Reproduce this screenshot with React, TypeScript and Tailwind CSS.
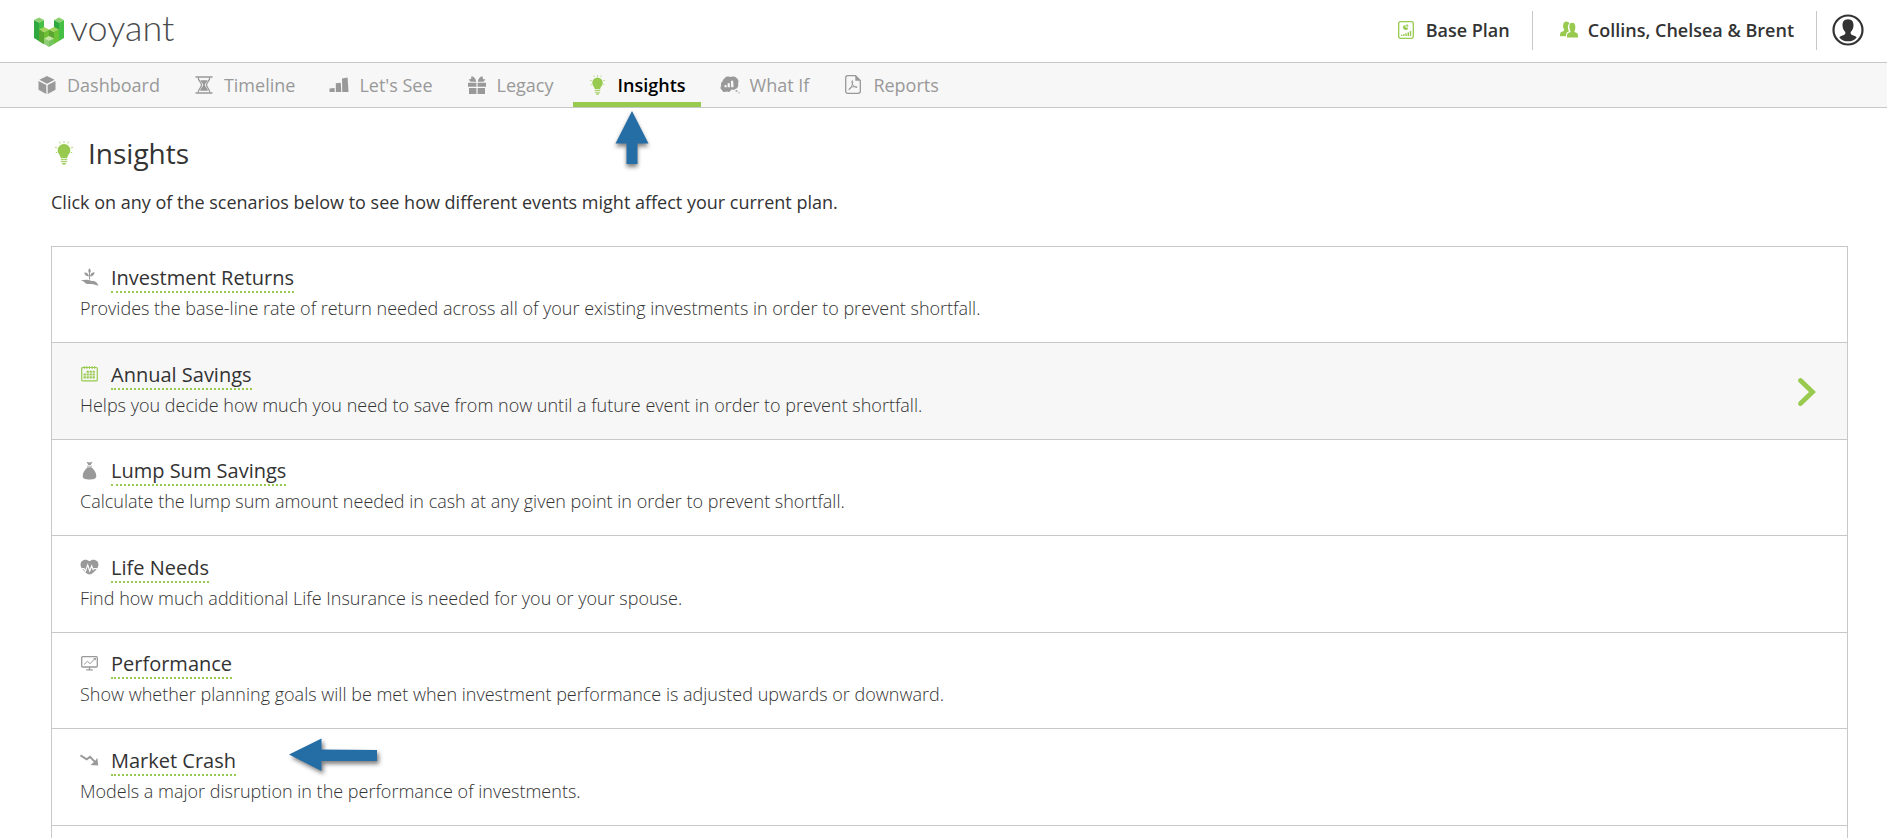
import type { ReactNode } from 'react';
import clsx from 'clsx';

type IconProps = { className?: string };

/* Icons */

function BulbIcon({ className }: IconProps) {
  return (
    <svg viewBox="0 0 18 24" className={className} fill="currentColor" aria-hidden="true">
      <path d="M9 3A6.300 6.300 0 0 0 2.700 9.200c0 3.600 2.900 4.600 3.100 8h6.400c.2-3.400 3.100-4.400 3.100-8A6.300 6.300 0 0 0 9 3z" />
      <path d="M5.800 18h6.400v1.200H5.800zM5.800 20h6.400v1.200H5.800zM6.500 22h5l-1 1.300a2 2 0 0 1-3 0z" opacity="0.8" />
      <path
        d="M9 .1v2M4.400.7l.9 1.700M13.600.7l-.9 1.700M0 6.500l2.100.4M18 6.500l-2.100.4M.8 11.800l1.500-.6M17.200 11.800l-1.500-.6"
        stroke="currentColor"
        strokeWidth="1"
        opacity="0.8"
      />
    </svg>
  );
}

function CubeIcon({ className }: IconProps) {
  return (
    <svg viewBox="0 0 18 18" className={className} fill="currentColor" aria-hidden="true">
      <path d="M9 0l7.600 3.700L9 7.800 1.400 3.700z" />
      <path d="M.5 5l7.800 4.100V18L.5 13.700z" />
      <path d="M17.500 5L9.700 9.100V18l7.800-4.300z" />
    </svg>
  );
}

function HourglassIcon({ className }: IconProps) {
  return (
    <svg viewBox="0 0 18 18" className={className} aria-hidden="true">
      <path d="M.5 1h17M.5 17h17" stroke="currentColor" strokeWidth="1.600" />
      <path
        d="M3.200 1.500c0 3.500 3.300 5 3.300 7.500s-3.300 4-3.300 7.500M14.800 1.500c0 3.500-3.300 5-3.300 7.500s3.300 4 3.300 7.500"
        fill="none"
        stroke="currentColor"
        strokeWidth="1.300"
      />
      <path d="M5.300 4.200h7.400C12 6.200 10 7.200 9.800 9c.2 2 2.700 3 3.200 5.800H5C5.500 12 8 11 8.200 9 8 7.200 6 6.200 5.300 4.200z" fill="currentColor" />
    </svg>
  );
}

function BarsIcon({ className }: IconProps) {
  return (
    <svg viewBox="0 0 20 18" className={className} fill="currentColor" aria-hidden="true">
      <path d="M.5 12.500l5-.6.3 4H.5zM6.800 7.200l5-.5.5 9.200H6.900zM13 2.500l5.600-.9.9 14.300h-6.200z" />
    </svg>
  );
}

function GiftIcon({ className }: IconProps) {
  return (
    <svg viewBox="0 0 18 18" className={className} fill="currentColor" aria-hidden="true">
      <path d="M0 6.800h8.400v4H0zM9.600 6.800H18v4H9.600zM1 12h7.400v6H1zM9.600 12H17v6H9.600z" />
      <path d="M8.200 5.700H2.600L.6 3.500 3 3 3.500.2C6 .5 8 2.800 8.200 5.700zM9.800 5.700h5.600l2-2.200L15 3 14.500.2C12 .5 10 2.800 9.800 5.700z" />
    </svg>
  );
}

function ThoughtIcon({ className }: IconProps) {
  return (
    <svg viewBox="0 0 20 18" className={className} aria-hidden="true">
      <path
        d="M4.500 2.500C5.500.5 8 .2 10 .9c2.300-.9 6-.8 7 1.600 1.700 1.200 1.800 3.700 1 5.100.8 2.200-.1 4.900-2.500 5.400-1.200 1-3 1-4.300.6-.6 2-2.400 2.800-4 2-2.400.9-4.800.6-5.200-1.600C.3 13.200 0 11 1.300 9.800.6 8 1 6.400 2.500 5.600c.2-1.400.8-2.600 2-3.100z"
        fill="currentColor"
      />
      <path d="M4.500 9.300l2-.3.2 2.300H4.500zM7.600 7.200l2.100-.3.300 4.400H7.700zM10.900 5l2.200-.4.5 6.700h-2.500z" fill="#f7f7f7" />
      <path d="M15.600 14.200h1.800v1.500h-1.800zM18.500 16.200h1.200v1.100h-1.200z" fill="currentColor" />
    </svg>
  );
}

function PdfIcon({ className }: IconProps) {
  return (
    <svg viewBox="0 0 16 19" className={className} aria-hidden="true">
      <path
        d="M2.500.7h8l4.800 4.800v10.800a2 2 0 0 1-2 2H2.700a2 2 0 0 1-2-2V2.500A1.800 1.800 0 0 1 2.500.7z"
        fill="none"
        stroke="currentColor"
        strokeWidth="1.300"
      />
      <path d="M10.300.7v5h5z" fill="currentColor" />
      <path
        d="M7.300 5.600c-.6 0-.6 1.300 0 3 .7 2.100 2.200 3.900 4.500 3.900.8-.6-.3-1.200-2-1-2.400.2-4.500.9-5.500 2-.9 1.200-.2 1.800.6.7 1.200-1.600 2.400-4 2.700-6.200.1-1.200.100-2.400-.3-2.400z"
        fill="none"
        stroke="currentColor"
      />
    </svg>
  );
}

function PlanIcon({ className }: IconProps) {
  return (
    <svg viewBox="0 0 16 18" className={className} aria-hidden="true">
      <rect x="0.700" y="0.700" width="14.600" height="16.600" rx="1.800" fill="none" stroke="currentColor" strokeWidth="1.300" />
      <path d="M7.500 4v2.400H10A2.500 2.500 0 1 1 7.500 4z" fill="currentColor" />
      <path d="M8.300 3.300a2.200 2.200 0 0 1 2.200 2.200H8.300z" fill="currentColor" />
      <path d="M3 13.700h1.400v1.300H3zM5.200 13h1.400v2H5.200zM7.400 12.200h1.400V15H7.400zM9.600 11.300H11V15H9.600zM11.800 10h1.400v5h-1.400z" fill="currentColor" />
    </svg>
  );
}

function PeopleIcon({ className }: IconProps) {
  return (
    <svg viewBox="0 0 18 17" className={className} fill="currentColor" aria-hidden="true">
      <path d="M6.200.4c2 0 3 1 3.200 2C8 3.600 7.600 5.500 8.100 8c.2.900.5 1.400.8 1.900-.2.800-1.700 1-2.200 1.800-.4.600-.6 1.700-.7 3.600H0c0-2.600.2-3.900 1.200-4.400 1.200-.6 2.800-.9 3-1.700.2-.6-.1-1-.5-1.600C2.700 6.200 2.600.4 6.200.4z" />
      <path d="M12.200 1.800c3.700 0 3.600 5.300 2.600 7.600-.3.600-.4 1-.3 1.400.3.700 1.800.9 2.600 1.400.8.500.9 2 .9 4.400H7c0-2.400.1-3.900.9-4.400.8-.5 2.300-.7 2.600-1.400.1-.4 0-.8-.3-1.400-1-2.300-1.700-7.600 2-7.600z" />
    </svg>
  );
}

function AvatarIcon({ className }: IconProps) {
  return (
    <svg viewBox="0 0 32 32" className={className} aria-hidden="true">
      <circle cx="16" cy="16" r="14.500" fill="none" stroke="currentColor" strokeWidth="2.200" />
      <path
        d="M16 5.200c4 0 5.700 2.800 5.500 6.400-.1 2.800-1.200 5-2.800 6.500-.2 1.500.2 2.500 1.500 3 1.800.7 3.500 1.200 4.500 2.300C22.500 26 19.500 27.300 16 27.300S9.500 26 7.300 23.400c1-1.100 2.700-1.600 4.500-2.300 1.300-.5 1.700-1.500 1.500-3-1.600-1.500-2.700-3.700-2.800-6.500-.2-3.600 1.500-6.400 5.500-6.400z"
        fill="currentColor"
      />
    </svg>
  );
}

function SproutIcon({ className }: IconProps) {
  return (
    <svg viewBox="0 0 19 18" className={className} fill="currentColor" aria-hidden="true">
      <path d="M9.500.3c1.700 1.600 1.700 3.700 0 5.300-1.600-1.600-1.600-3.700 0-5.300zM4.200 4.600c2.600-.3 4.300 1 4.700 3.600-2.600.2-4.300-1-4.700-3.600zM14.600 4.200c-.2 2.700-1.800 4.100-4.500 4.200.1-2.700 1.800-4.100 4.500-4.200z" />
      <path d="M9 5h1v6.500H9z" />
      <path d="M.6 12c2.400.2 5.200-.8 8-.1 1.700.4 3 1.200 5 1.200 2 .1 4 2.400 5 4.600-2.300-.5-4.700-1.700-7.400-1.700-3 0-5 .3-6.200-1.200-.9-1.200-2.600-2.100-4.400-2.800z" />
    </svg>
  );
}

function CalendarIcon({ className }: IconProps) {
  return (
    <svg viewBox="0 0 19 18" className={className} fill="currentColor" aria-hidden="true">
      <rect x="1.700" y="2.500" width="15.600" height="13.400" rx="1" fill="none" stroke="currentColor" strokeWidth="1.200" />
      <path d="M3.800.9h.9v3h-.9zM6.400.9h.9v3h-.9zM9 .9h.9v3H9zM11.700.9h.9v3h-.9zM14.300.9h.9v3h-.9z" />
      <path d="M3.600 11.300h2.200v2.300H3.600zM3.600 8.500h2.200v2.100H3.600zM6.600 5.700h2.200v2.100H6.600zM6.600 8.500h2.200v2.100H6.600zM6.600 11.300h2.200v2.300H6.600zM9.600 5.700h2.200v2.100H9.600zM9.600 8.500h2.200v2.100H9.600zM9.600 11.300h2.200v2.300H9.600zM12.600 5.700h2.200v2.100h-2.200zM12.600 8.500h2.200v2.100h-2.200zM12.600 11.300h2.200v2.300h-2.200z" />
    </svg>
  );
}

function MoneyBagIcon({ className }: IconProps) {
  return (
    <svg viewBox="0 0 19 19" className={className} fill="currentColor" aria-hidden="true">
      <path d="M6.500.7l3 .9 3-.9-1.800 3.200H8.300zM7 4.700h5v.9H7z" />
      <path d="M7.600 6.200h3.800c3 2.300 5 5.800 4.900 8.800 0 2.900-3 3.500-6.800 3.500s-6.800-.6-6.800-3.500c-.1-3 1.900-6.500 4.900-8.800z" />
    </svg>
  );
}

function HeartPulseIcon({ className }: IconProps) {
  return (
    <svg viewBox="0 0 19 17" className={className} aria-hidden="true">
      <path d="M9.500 2.300C11.500.2 15.300 0 17.300 2.300c2 2.400 1.200 5.900-.7 8-2.100 2.300-4.600 5.300-7.100 5.300s-5-3-7.100-5.300C.5 8.200-.3 4.700 1.700 2.300 3.700 0 7.500.2 9.500 2.300z" fill="currentColor" />
      <path d="M2 9.600h2l1.500 2.500L7.700 6l2 6 2-5.200 1.400 4 1.200-1.300h2.700" fill="none" stroke="#fff" strokeWidth="1.100" />
    </svg>
  );
}

function MonitorIcon({ className }: IconProps) {
  return (
    <svg viewBox="0 0 19 17" className={className} fill="none" stroke="currentColor" aria-hidden="true">
      <rect x="1.700" y="1.700" width="15.600" height="10.300" rx="1" strokeWidth="1.300" />
      <path d="M4 9.500l3.500-3.200L10 8.800l4.500-4.700" />
      <path d="M13.500 3.800l1.700-.3.100 1.800M9.500 12v2.300M6.300 14.900h6.400" strokeWidth="1.200" />
    </svg>
  );
}

function CrashIcon({ className }: IconProps) {
  return (
    <svg viewBox="0 0 20 17" className={className} aria-hidden="true">
      <path d="M.5 3l6.500 4.200 3.600-2.500 5.800 6" fill="none" stroke="currentColor" strokeWidth="2.100" />
      <path d="M18.200 5.500l1 8.200-8.200-.5 2.900-2.300 2-1.900z" fill="currentColor" />
    </svg>
  );
}

function ChevronIcon({ className }: IconProps) {
  return (
    <svg viewBox="0 0 20 30" className={className} aria-hidden="true">
      <path d="M3.500 3.500L15.500 15l-12 11.500" fill="none" stroke="currentColor" strokeWidth="4.800" strokeLinecap="round" />
    </svg>
  );
}

function LogoMark({ className }: IconProps) {
  return (
    <svg viewBox="0 0 30 30" className={className} aria-hidden="true">
      <path d="M0 3l5 2.500v10l5 3v8.700L0 21z" fill="#2fa840" />
      <path d="M5 5.500L10 3v10l-5 3z" fill="#45c045" />
      <path d="M0 3L5 .5 10 3 5 5.500z" fill="#8ccf6e" />
      <path d="M20 3l5 2.500V17l-5 3z" fill="#2fa840" />
      <path d="M25 5.500L30 3v18l-5 3z" fill="#45c045" />
      <path d="M20 3L25 .5 30 3l-5 2.500z" fill="#8ccf6e" />
      <path d="M5 12.500l5 2.500v12l-5-3z" fill="#5ba631" />
      <path d="M10 15l5-2.500V27h-5z" fill="#6fbf34" />
      <path d="M5 12.500L10 10l5 2.500-5 2.500z" fill="#a3d45c" />
      <path d="M15 12.500l5 2.500v12h-5z" fill="#5ba631" />
      <path d="M20 15l5-2.500V24l-5 3z" fill="#6cc335" />
      <path d="M15 12.500l5-2.500 5 2.500-5 2.500z" fill="#a3d45c" />
      <path d="M10 21.500l5 2.500v6l-5-3z" fill="#8fce77" />
      <path d="M15 24l5-2.500V27l-5 3z" fill="#74c45f" />
      <path d="M10 21.500l5-2.500 5 2.500-5 2.500z" fill="#c6e6a5" />
    </svg>
  );
}

function ArrowUp({ className }: IconProps) {
  return (
    <svg viewBox="0 0 34 54" className={className} aria-hidden="true">
      <path d="M17 0l16.500 32.500h-11V53h-11V32.500H.5z" fill="#256da5" />
    </svg>
  );
}

function ArrowLeft({ className }: IconProps) {
  return (
    <svg viewBox="0 0 88 34" className={className} aria-hidden="true">
      <path d="M0 16.500L32.500.5v11L88 12v11H32.500v10z" fill="#256da5" />
    </svg>
  );
}

/* Data */

const navItems = [
  { label: 'Dashboard', icon: <CubeIcon className="h-[18px] w-[18px]" /> },
  { label: 'Timeline', icon: <HourglassIcon className="h-[18px] w-[18px]" /> },
  { label: "Let's See", icon: <BarsIcon className="h-[18px] w-5" /> },
  { label: 'Legacy', icon: <GiftIcon className="h-[18px] w-[18px]" /> },
  { label: 'Insights', icon: <BulbIcon className="h-5 w-[15px] text-[#97ca4f]" />, active: true },
  { label: 'What If', icon: <ThoughtIcon className="h-[18px] w-5" /> },
  { label: 'Reports', icon: <PdfIcon className="h-[19px] w-4" /> },
];

type Scenario = {
  title: string;
  description: string;
  icon: ReactNode;
  selected?: boolean;
  pointer?: boolean;
};

const scenarios: Scenario[] = [
  {
    title: 'Investment Returns',
    description:
      'Provides the base-line rate of return needed across all of your existing investments in order to prevent shortfall.',
    icon: <SproutIcon className="h-[18px] w-[19px]" />,
  },
  {
    title: 'Annual Savings',
    description: 'Helps you decide how much you need to save from now until a future event in order to prevent shortfall.',
    icon: <CalendarIcon className="h-[18px] w-[19px] text-[#97ca4f]" />,
    selected: true,
  },
  {
    title: 'Lump Sum Savings',
    description: 'Calculate the lump sum amount needed in cash at any given point in order to prevent shortfall.',
    icon: <MoneyBagIcon className="h-[19px] w-[19px]" />,
  },
  {
    title: 'Life Needs',
    description: 'Find how much additional Life Insurance is needed for you or your spouse.',
    icon: <HeartPulseIcon className="h-[17px] w-[19px]" />,
  },
  {
    title: 'Performance',
    description: 'Show whether planning goals will be met when investment performance is adjusted upwards or downward.',
    icon: <MonitorIcon className="h-[17px] w-[19px]" />,
  },
  {
    title: 'Market Crash',
    description: 'Models a major disruption in the performance of investments.',
    icon: <CrashIcon className="h-[17px] w-5" />,
    pointer: true,
  },
];

function Header() {
  return (
    <header className="flex h-[63px] items-start justify-between border-b border-[#c8c8c8] bg-white pr-[23px] pl-[34px]">
      <a href="#" className="flex pt-[17px]">
        <LogoMark className="h-[30px] w-[30px]" />
        <span className="ml-1.5 -mt-3 font-[Lato] text-4xl leading-[44px] font-light text-[#4a4b4d]">voyant</span>
      </a>

      <div className="mt-[11px] flex h-[39px] items-center text-lg font-semibold text-[#333]">
        <a href="#" className="flex h-full items-center border-r border-[#c8c8c8] pr-[22px] pb-0.5">
          <PlanIcon className="mr-3 h-[18px] w-4 text-[#97ca4f]" />
          Base Plan
        </a>
        <a href="#" className="flex h-full items-center border-r border-[#c8c8c8] pr-[22px] pb-0.5 pl-[27px]">
          <PeopleIcon className="mr-2.5 h-[17px] w-[18px] text-[#97ca4f]" />
          Collins, Chelsea &amp; Brent
        </a>
        <button type="button" aria-label="Account" className="ml-[15px] pb-0.5 text-[#333]">
          <AvatarIcon className="h-8 w-8" />
        </button>
      </div>
    </header>
  );
}

function Nav() {
  return (
    <nav className="flex h-[45px] gap-1 border-b border-[#c8c8c8] bg-[#f7f7f7] pl-[22px]">
      {navItems.map((item) => (
        <a
          key={item.label}
          href="#"
          className={clsx(
            'relative flex items-center border-b-5 px-[15px] pt-1 text-lg',
            item.active ? 'border-[#97ca4f] font-semibold text-black' : 'border-transparent text-[#999]',
          )}
        >
          <span className="mr-2.5 flex w-5 justify-center text-[#999]">{item.icon}</span>
          {item.label}
          {item.active && (
            <ArrowUp className="absolute top-12 left-[42px] h-[54px] w-[34px] drop-shadow-[0_3px_2px_rgba(0,0,0,0.5)]" />
          )}
        </a>
      ))}
    </nav>
  );
}

function ScenarioRow({ title, description, icon, selected, pointer }: Scenario) {
  return (
    <li
      className={clsx(
        'flex items-center justify-between border-b border-[#c8c8c8] pt-4 pr-[30px] pb-5 pl-7 even:pt-[17px]',
        selected && 'bg-[#f7f7f7]',
      )}
    >
      <div>
        <h2 className="flex h-8 items-start text-xl leading-[30px] text-[#333]">
          <span className="mt-1 mr-3 flex h-5 w-[19px] items-center text-[#999]">{icon}</span>
          <span className="relative">
            <a href="#" className="border-b-2 border-dotted border-[#97ca4f]">
              {title}
            </a>
            {pointer && (
              <ArrowLeft className="absolute -top-2 left-full ml-[53px] h-[34px] w-[88px] drop-shadow-[2px_3px_2px_rgba(0,0,0,0.5)]" />
            )}
          </span>
        </h2>
        <p className="text-lg leading-[27px] font-light text-[#333]">{description}</p>
      </div>
      {selected && <ChevronIcon className="mt-1 h-[30px] w-5 text-[#97ca4f]" />}
    </li>
  );
}

export default function App() {
  return (
    <div className="bg-white font-['Open_Sans',sans-serif]">
      <Header />
      <Nav />

      <main className="pt-6 pr-[39px] pl-[51px]">
        <h1 className="flex items-center gap-[15px] pl-1 text-[28px] leading-[42px] font-medium text-[#333]">
          <BulbIcon className="h-6 w-[18px] text-[#97ca4f]" />
          Insights
        </h1>
        <p className="mt-[15px] text-lg leading-[27px] text-[#333]">
          Click on any of the scenarios below to see how different events might affect your current plan.
        </p>

        <ul className="mt-[30px] border-x border-t border-[#c8c8c8]">
          {scenarios.map((scenario) => (
            <ScenarioRow key={scenario.title} {...scenario} />
          ))}
          <li aria-hidden="true" className="h-3" />
        </ul>
      </main>
    </div>
  );
}
